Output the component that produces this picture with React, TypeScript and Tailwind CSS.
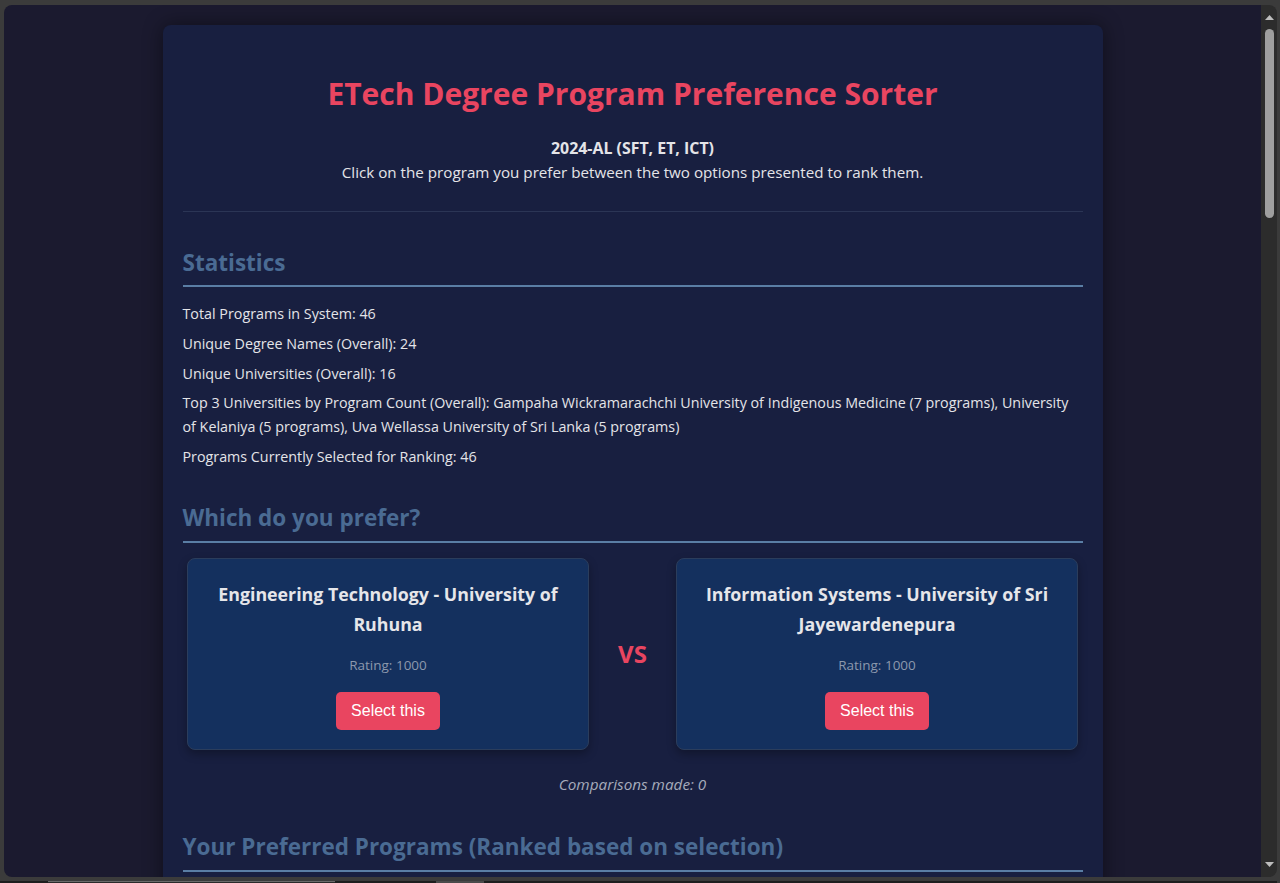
const stats = [
  "Total Programs in System: 46",
  "Unique Degree Names (Overall): 24",
  "Unique Universities (Overall): 16",
  "Top 3 Universities by Program Count (Overall): Gampaha Wickramarachchi University of Indigenous Medicine (7 programs), University of Kelaniya (5 programs), Uva Wellassa University of Sri Lanka (5 programs)",
  "Programs Currently Selected for Ranking: 46",
];

const pair = [
  { name: "Engineering Technology - University of Ruhuna", rating: 1000 },
  { name: "Information Systems - University of Sri Jayewardenepura", rating: 1000 },
];

function SectionTitle({ children, className }: { children: React.ReactNode; className?: string }) {
  return (
    <h2
      className={
        "text-[22.5px] font-bold leading-[30px] text-[#4a6b93] pb-[7px] border-b-2 border-[#5a7ea5] " +
        (className ?? "")
      }
    >
      {children}
    </h2>
  );
}

function ProgramCard({ name, rating }: { name: string; rating: number }) {
  return (
    <div className="w-[402px] h-[192px] bg-[#14305e] border border-[#2b3d5c] rounded-[8px] shadow-[0_4px_10px_rgba(0,0,0,0.3)] pt-[20px] px-[20px] text-center">
      <h3 className="text-[17.8px] font-bold leading-[30px] text-[#e6e6ea]">{name}</h3>
      <p className="mt-[15px] text-[13.5px] leading-[22px] text-[#8c98ad]">Rating: {rating}</p>
      <button className="mt-[16px] h-[38px] px-[15px] rounded-[5px] bg-[#e94560] text-white text-[16px] font-['Liberation_Sans',Arial,sans-serif] leading-[18px]">
        Select this
      </button>
    </div>
  );
}

export default function App() {
  return (
    <div className="h-[883px] bg-[#3b3b3b] pt-[5px] pl-[4px] pr-[3px] overflow-hidden font-['Open_Sans',sans-serif]">
      <div className="h-[872px] flex rounded-[8px] overflow-hidden">
        <div className="flex-1 bg-[#1b1a2f] pt-[20px] overflow-hidden">
          <div className="w-[940px] mx-auto bg-[#181f40] rounded-[8px] shadow-[0_0_20px_rgba(0,0,0,0.45)] px-[20px] pt-[20px] pb-[40px] text-[#e4e4e8]">
            <header className="text-center pt-[29px] pb-[27px] border-b border-[#2b3555]">
              <h1 className="text-[30px] font-bold leading-[40px] text-[#e94560]">
                ETech Degree Program Preference Sorter
              </h1>
              <div className="mt-[22px] leading-[24px]">
                <p className="text-[15.9px] font-bold">2024-AL (SFT, ET, ICT)</p>
                <p className="text-[15.2px]">
                  Click on the program you prefer between the two options presented to rank them.
                </p>
              </div>
            </header>

            <section className="mt-[36px]">
              <SectionTitle>Statistics</SectionTitle>
              <div className="mt-[15px] text-[14.3px] leading-[24px]">
                {stats.map((s) => (
                  <p key={s} className="mb-[5.75px] last:mb-0">
                    {s}
                  </p>
                ))}
              </div>
            </section>

            <section className="mt-[34px]">
              <SectionTitle className="pb-[8px]">Which do you prefer?</SectionTitle>
              <div className="mt-[15px] flex items-center justify-center">
                <ProgramCard {...pair[0]} />
                <div className="w-[87px] text-center text-[24px] font-bold text-[#e94560] leading-[30px]">VS</div>
                <ProgramCard {...pair[1]} />
              </div>
              <p className="mt-[22px] text-center italic text-[15.3px] leading-[24px] text-[#a6abbb]">
                Comparisons made: 0
              </p>
            </section>

            <section className="mt-[36px]">
              <SectionTitle className="pb-[8px]">Your Preferred Programs (Ranked based on selection)</SectionTitle>
              <div className="h-[200px]" />
            </section>
          </div>
        </div>
        <div className="w-[16px] bg-[#2c2c2c] flex flex-col items-center">
          <svg className="mt-[10px]" width="9" height="5" viewBox="0 0 9 5">
            <path d="M4.5 0L9 5H0z" fill="#bdbdbd" />
          </svg>
          <div className="mt-[9px] w-[9px] h-[189px] rounded-t-[5px] rounded-b-[5px] bg-[#9f9f9f]" />
          <div className="flex-1" />
          <svg className="mb-[10px]" width="9" height="5" viewBox="0 0 9 5">
            <path d="M0 0H9L4.5 5z" fill="#bdbdbd" />
          </svg>
        </div>
      </div>
      <div className="mt-[4px] h-[2px] bg-[#1e1e1e] flex -ml-[4px]">
        <div className="ml-[48px] w-[287px] h-[2px] border-t border-[#6a6a6a] bg-[#2a2a2a]" />
        <div className="ml-[101px] w-[48px] h-[2px] bg-[#4a4a4a]" />
      </div>
    </div>
  );
}
